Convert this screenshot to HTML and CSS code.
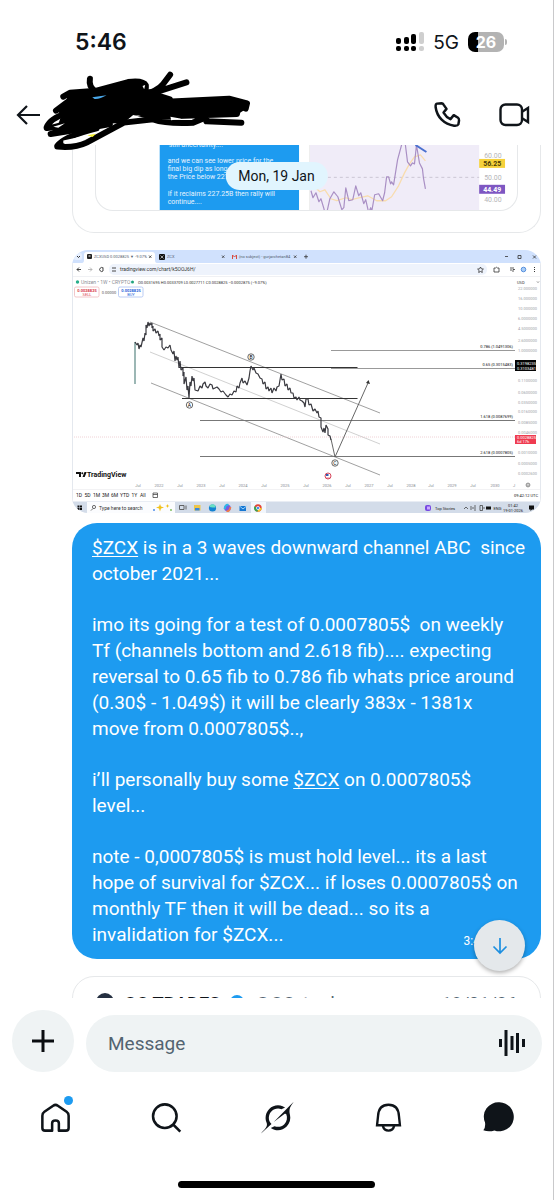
FILE: index.html
```
<!DOCTYPE html>
<html lang="en">
<head>
<meta charset="utf-8">
<meta name="viewport" content="width=device-width, initial-scale=1">
<title>Messages</title>
<link rel="stylesheet" href="styles.css">
</head>
<body>
<div class="screen">
  <div class="status">
    <time class="clock">5:46</time>
    <div class="status-right">
      <svg class="signal" viewBox="0 0 28 20" aria-label="Signal">
        <g fill="#000"><rect x="0" y="6" width="5" height="6" rx="2"/><rect x="8" y="5" width="5" height="7" rx="2"/><rect x="15" y="2" width="5" height="10" rx="2"/><rect x="0" y="14" width="5" height="5" rx="2"/><rect x="8" y="14" width="5" height="5" rx="2"/><rect x="15" y="14" width="5" height="5" rx="2"/></g>
        <g fill="#cfcfcf"><rect x="23" y="0" width="5" height="12" rx="2"/><rect x="23" y="14" width="5" height="5" rx="2"/></g>
      </svg>
      <span class="network">5G</span>
      <span class="battery"><span class="battery-body">26</span><span class="battery-cap"></span></span>
    </div>
  </div>

  <header class="header">
    <button class="icon-btn" aria-label="Back">
      <svg class="back" viewBox="0 0 24 22" fill="none" stroke="#0f1419" stroke-width="2.200"><path d="M24 11H2M11 2 2 11l9 9"/></svg>
    </button>
    <div class="header-actions">
      <button class="icon-btn" aria-label="Call">
        <svg class="call" viewBox="466 298 88 88" fill="none" stroke="#0f1419" stroke-width="7.500" stroke-linejoin="round"><path d="M478 309 492 308Q496 308 498 312L507 325 498 336Q506 350 519 356L529 344 542 352Q545 354 545 360L543 372Q541 377 530 376C500 372 478 350 474 320Q473 310 478 309Z"/></svg>
      </button>
      <button class="icon-btn" aria-label="Video call">
        <svg class="video" viewBox="0 0 31 24" fill="none" stroke="#0f1419" stroke-width="2.400"><rect x="1.500" y="1.500" width="21.500" height="20.500" rx="5"/><path d="M23.500 8.500 29 5v14l-5.500-3.500"/></svg>
      </button>
    </div>
    <svg class="redaction" viewBox="120 210 640 240" aria-hidden="true">
      <path d="M190 285 270 272 385 244 432 247 440 268 470 268 490 300 690 292 742 310 738 328 715 342 620 352 560 354 500 350 450 358 400 345 372 368 310 372 290 380 150 400 175 372 185 345 168 330 205 300Z"/>
      <g fill="none" stroke="#000" stroke-width="18" stroke-linecap="round" stroke-linejoin="round">
        <path d="M270 236Q266 260 285 272"/>
        <path d="M190 290 210 278 290 272 385 246Q430 240 438 256 440 285 410 298L200 345"/>
        <path d="M511 224 490 252Q475 272 420 290M560 247 440 285M470 285 510 298"/>
        <path d="M168 332 210 300M140 382Q150 355 200 340M152 402 260 385 330 372M140 384Q160 385 200 370"/>
        <path d="M172 438Q190 410 290 385M172 440Q225 445 260 428L372 368 460 358Q500 372 580 368L620 352M500 305 688 296 742 310 738 326M460 350 712 342 714 326M620 364 725 368"/>
      </g>
      <path d="M190 422 280 402 258 414Q225 432 190 430Z" fill="#fff"/>
      <path d="M277 292 320 286Q300 298 284 297Z" fill="#4aa8ea"/><path d="M262 406 288 401 278 411Z" fill="#f2ee2c"/>
      <path d="M428 258 436 255 433 268ZM160 380 195 370 175 383ZM512 350 545 356 514 361ZM402 348 423 345 406 351Z" fill="#fff"/>
    </svg>
  </header>

  <main class="thread">
    <span class="date-pill">Mon, 19 Jan</span>

    <article class="card card-top">
      <div class="quote">
        <svg class="picture" viewBox="95 145 423 65" role="img" aria-label="Quoted post with chart">
          <rect x="159" y="145" width="140" height="66" fill="#1d9bf0"/>
          <g class="s7" fill="#e4f3fe"><text x="168" y="147">still uncertainty....</text><text x="167" y="163">and we can see lower price for the</text><text x="167" y="171">final big dip as long as</text><text x="167" y="179">the Price below 227.25B</text><text x="167" y="196">If it reclaims 227.25B then rally will</text><text x="167" y="204">continue....</text></g>
          <rect x="310" y="145" width="170" height="66" fill="#f0ecf8"/>
          <path d="M310 177.500H480" stroke="#cbc6d4" stroke-dasharray="3 3"/>
          <path d="M309.500 145V211" stroke="#eee"/>
          <g fill="none" stroke-linejoin="round">
            <path stroke="#f8dcae" stroke-width="1.300" d="M311 184 320 192 325 190 331 199 337 201 346 198 352 200 360 198 368 196 377 201 386 201 392 197 399 186 405 173 410 164 415 157 421 155 426 161"/>
            <path stroke="#a98fc4" stroke-width="1.200" d="M311 191 313 198 316 193 319 202 321 199 324 209 326 217 330 199 334 192 338 197 342 210 344 208 346 188 349 201 353 200 356 186 359 196 361 193 364 204 366 200 369 213 371 208 372 212 375 195 379 194 383 201 385 193 387 177 389 177 391 184 392 182 394 185 398 160 402 145 403 135 405 138 408 162 411 166 413 163 415 164 417 145 420 163 423 169 424 178 426 189"/>
            <path stroke="#4a70cf" stroke-width="2" d="M416 145 427 152"/>
          </g>
          <rect x="480" y="159" width="26" height="9" fill="#f5d13b"/><rect x="480" y="185" width="26" height="9" fill="#7e57c2"/>
          <g class="s7" fill="#b5b5b8"><text x="485" y="158">60.00</text><text x="485" y="180">50.00</text><text x="485" y="202">40.00</text></g>
          <g class="s7 strong"><text x="484" y="166" fill="#4a3b06">56.25</text><text x="484" y="192" fill="#fff">44.49</text></g>
        </svg>
      </div>
    </article>

    <svg class="picture photo" viewBox="72 250 469 263" role="img" aria-label="TradingView chart of ZCX">
      <rect x="72" y="250" width="469" height="263" fill="#fff"/>
      <rect x="72" y="250" width="469" height="13" fill="#d0e1fd"/>
      <path d="M82 263Q84 263 84 260V255Q84 252 87 252H152Q155 252 155 255V260Q155 263 157 263Z" fill="#fff"/>
      <rect x="74" y="253" width="8" height="7" rx="2" fill="#e6effe"/><path d="m77 256 1.500 1.500 1.500-1.500" fill="none" stroke="#333"/>
      <rect x="87" y="254" width="5" height="5" rx="1" fill="#222"/><path d="M88.500 256h2" stroke="#fff"/>
      <rect x="159" y="254" width="6" height="6" rx="1" fill="#111"/><path d="m160.500 255.500 3 3m0-3-3 3" stroke="#fff" stroke-width=".6"/>
      <path d="M232.500 259v-4l2 2 2-2v4" stroke="#d64b3f" fill="none"/>
      <path d="m149 255.500 2.400 2.400m0-2.400-2.400 2.400m73-2.400 2.400 2.400m0-2.400-2.400 2.400m72-2.400 2.400 2.400m0-2.400-2.400 2.400m10-1.200h4m-2-2v4M505 256.500h3M518 255.500h3v3h-3zM533 255.500l3 3m0-3-3 3" fill="none" stroke="#333" stroke-width=".8"/>
      <g class="s4" fill="#53606f"><text x="94" y="258">ZCXUSD 0.0028825 ▼ -9.07%</text><text x="167" y="258">ZCX</text><text x="239" y="258">(no subject) - gurjarchetan84</text></g>
      <rect x="109" y="264" width="378" height="11" rx="5" fill="#eef3fc"/>
      <path d="M81 269.500h-4m2-2-2 2 2 2M103 268a2 2 0 1 0 0 3v-3.500M112 268h4m-4 3h4" fill="none" stroke="#333" stroke-width=".9"/><path d="M88 269.500h4m-2-2 2 2-2 2" fill="none" stroke="#aaa" stroke-width=".8"/>
      <text class="s5" x="120" y="271" fill="#333">tradingview.com/chart/k5OOJ6H/</text>
      <path d="m480.500 267 .9 1.800 2 .3-1.500 1.400.4 2-1.800-1-1.800 1 .4-2-1.500-1.400 2-.3zM494 268h1.500q1-1.500 2 0h1.500v4h-5zM510 268h4m-4 2h2m1 2v-2.500h2" fill="none" stroke="#333" stroke-width=".8"/><circle cx="523.500" cy="269.500" r="2.300" fill="#a9cdf6" stroke="#3a7bd5" stroke-width=".8"/><path d="M534.500 267v5" stroke="#333" stroke-dasharray="1 1"/>
      <path d="M72 276.500h469" stroke="#f0f1f4"/>
      <circle cx="77.500" cy="282" r="1.700" fill="#27ae8b"/><circle cx="132.500" cy="282" r="1.500" fill="#1fa37b"/>
      <text class="s5" x="81" y="284" fill="#8b8e96">Unizen • 1W • CRYPTO</text>
      <text class="s4" x="138" y="283.500" fill="#333">O0.0031695 H0.0033709 L0.0027711 C0.0028825 −0.0002875 (−9.07%)</text>
      <g fill="#fff" stroke-width=".8"><rect x="74.500" y="287" width="24.500" height="10" rx="1.500" stroke="#efb9bd"/><rect x="118.500" y="287" width="24.500" height="10" rx="1.500" stroke="#a9bff1"/></g>
      <g class="s4 strong" text-anchor="middle"><text x="87" y="291.500" fill="#d8394a">0.0028825</text><text x="131" y="291.500" fill="#2962d9">0.0028825</text></g>
      <g class="s4" text-anchor="middle"><text x="87" y="296" fill="#d8394a">SELL</text><text x="131" y="296" fill="#2962d9">BUY</text><text x="109" y="293.500" fill="#555">0.00000</text></g>

      <g fill="none" stroke="#888" stroke-width=".8"><path d="M150 322 380 413M151 383 380 475"/><path d="M150 352 380 444" stroke="#c4c4c4"/></g>
      <path d="M331 350.500H515M331 368.500H515" stroke="#999"/>
      <path d="M179 367.500H357.500M182 398.500H357.500" stroke="#333" stroke-width="1.200"/>
      <path d="M200 420.500H515M200 456.500H515" stroke="#777"/>
      <path d="M72 437H515" stroke="#ecc6cb" stroke-width=".8" stroke-dasharray="1 1"/>
      <path d="M135 384V342" stroke="#5a8783" stroke-width="1.200"/>
      <g fill="none" stroke="#3a3a40" stroke-width="1.200" stroke-linejoin="bevel">
        <path d="M135 342 137 345 138 343 139 349 140 345 141 347 143 338 144 341 145 333 146 335 146 325 147 328 148 322 149 326 150 323 151 325 152 323 152 328 153 326 153 331 155 329 156 333 158 331 159 336 160 334 160 340 162 338 162 347 164 350 166 347 168 348 170 345 171 350 173 354 174 351 175 361 176 356 177 360 178 357 179 368 180 361 181 370 183 368 183 376 184 372 184 384 186 377 187 390 188 386 189 398 190 382 191 386 192 376 193 381 194 378 195 390 198 391 200 386 202 388 203 384 205 382 206 386 208 388 210 384 212 385 213 389 215 388 217 387 219 389 221 392 223 391 226 395 228 397 230 394 232 395 234 391 236 392 237 386 239 388 240 383 242 378 243 383 245 381 247 385 249 378 250 371 251 366 253 370 254 368 256 373 258 374 260 378 262 379 263 384 265 382 266 389 268 387 269 391 271 388 272 393 274 388 276 391 277 387 279 386 280 380 281 374 282 380 284 379 285 386 287 384 288 390 290 388 291 393 293 393 294 398 296 397 297 400 299 397 300 400 302 401 304 403 305 407 306 399 308 399 309 405 311 404 313 411 315 409 317 413 318 411 319 417 321 418 321 427 323 432 324 428 325 433 326 425 328 429 328 435 330 436 331 440"/>
        <path d="M331 439 335 457 368 383" stroke="#555" stroke-width=".9"/>
      </g>
      <path d="m368.500 380 1.500 4-4-1z" fill="#333"/>
      <g fill="#fff" stroke="#444" stroke-width=".8"><circle cx="251" cy="357" r="3.200"/><circle cx="189.500" cy="405" r="3.200"/><circle cx="335" cy="463" r="3.200"/></g>
      <g class="s5" text-anchor="middle"><text x="251" y="359">B</text><text x="189.500" y="407">A</text><text x="335" y="465">C</text></g>
      <circle cx="328" cy="476" r="3" fill="#fff" stroke="#d6455a"/><path d="M326 475h2.500" stroke="#345bb0" stroke-width="2"/><path d="M326 478h4" stroke="#d6455a" stroke-width=".7"/>
      <g class="s4" text-anchor="end" fill="#111"><text x="513" y="347.500">0.786 (1.0491306)</text><text x="513" y="366">0.65 (0.3015483)</text><text x="513" y="418">1.618 (0.0087699)</text><text x="513" y="454">2.618 (0.0007805)</text></g>
      <g class="s4" fill="#a0a2a8"><text x="518" y="290">22.000000</text><text x="518" y="300">16.000000</text><text x="518" y="310">10.000000</text><text x="518" y="320">6.0000000</text><text x="518" y="330">4.5000000</text><text x="518" y="342">2.6000000</text><text x="518" y="352">1.0000000</text><text x="518" y="382">0.1100000</text><text x="518" y="394">0.0600000</text><text x="518" y="404">0.0350000</text><text x="518" y="413">0.0160000</text><text x="518" y="424">0.0085000</text><text x="518" y="434">0.0046000</text><text x="518" y="454">0.0010000</text><text x="518" y="465">0.0005000</text><text x="518" y="475">0.0002600</text></g>
      <text class="s4" x="517" y="284" fill="#333">USD</text><path d="m537 281.500 1 1 1-1" stroke="#333" fill="none" stroke-width=".6"/>
      <rect x="515" y="360" width="21" height="11" fill="#050505"/><rect x="515" y="435" width="21" height="9" fill="#ef3b50"/>
      <g class="s4" fill="#fff"><text x="517" y="364.500">0.3198235</text><text x="517" y="369.500">0.3103481</text><text x="517" y="439">0.0028825</text><text x="517" y="443">6d 17h</text></g>

      <path d="M76 472h5v5h-2v-3h-3zM84.500 472h2.200l-2 5h-2.200z" fill="#111"/><circle cx="82.300" cy="473.200" r="1" fill="#111"/>
      <text class="s7 strong" x="87" y="477" fill="#111">TradingView</text>
      <g class="s4" text-anchor="middle" fill="#85888f"><text x="138" y="486.500">Jul</text><text x="159" y="486.500">2022</text><text x="180" y="486.500">Jul</text><text x="201" y="486.500">2023</text><text x="222" y="486.500">Jul</text><text x="243" y="486.500">2024</text><text x="264" y="486.500">Jul</text><text x="285" y="486.500">2025</text><text x="306" y="486.500">Jul</text><text x="327" y="486.500">2026</text><text x="348" y="486.500">Jul</text><text x="369" y="486.500">2027</text><text x="390" y="486.500">Jul</text><text x="411" y="486.500">2028</text><text x="431" y="486.500">Jul</text><text x="452" y="486.500">2029</text><text x="473" y="486.500">Jul</text><text x="495" y="486.500">2030</text><text x="514" y="486.500">J</text></g>
      <circle cx="528" cy="485" r="1.900" fill="none" stroke="#555" stroke-width=".7"/><circle cx="528" cy="485" r=".6"/>
      <path d="M72 489.500h469" stroke="#f2f2f4"/>
      <g class="s5" fill="#222"><text x="76" y="497">1D</text><text x="84.500" y="497">5D</text><text x="93" y="497">1M</text><text x="102" y="497">3M</text><text x="111" y="497">6M</text><text x="120" y="497">YTD</text><text x="131.500" y="497">1Y</text><text x="140" y="497">All</text></g>
      <text class="s4" x="538" y="496.500" text-anchor="end" fill="#111">09:42:12 UTC</text>
      <path d="M153 493h4.500v4.500H153zM153 494.500h4.500" fill="none" stroke="#333" stroke-width=".7"/>

      <rect x="72" y="501.500" width="469" height="12" fill="#d3dce9"/><rect x="87" y="502" width="88" height="11" fill="#fbfcfe"/>
      <path d="M77.500 505.500h2v2h-2zM80 505.500h2v2h-2zM77.500 508h2v2h-2zM80 508h2v2h-2z" fill="#111"/>
      <circle cx="94" cy="507" r="1.600" fill="none" stroke="#333" stroke-width=".7"/><path d="m93 508.500-2 2" stroke="#333" stroke-width=".7"/>
      <text class="s5" x="99" y="509.500" fill="#333">Type here to search</text>
      <path d="m160 504 1 2.500 3 1-3 1-1 3-1-3-3-1 3-1z" fill="#f2c21d"/><path d="m167.500 504 .6 1.400 1.500.6-1.500.6-.6 1.400-.6-1.400-1.500-.6 1.500-.6z" fill="#f2c21d"/><circle cx="154" cy="510" r="1" fill="#4f8ee8"/><circle cx="171" cy="510" r=".9" fill="#72b84c"/>
      <path d="M179.500 505.500h4.500v4h-4.500zM186 505.500v4" fill="none" stroke="#555" stroke-width=".9"/>
      <rect x="194" y="505" width="6.500" height="5.500" fill="#edc54a"/><rect x="195" y="508" width="4.500" height="2.500" fill="#3b88dc"/>
      <circle cx="212.500" cy="508" r="3.600" fill="#1483d2"/><path d="M209.500 507a3 3 0 0 1 6 .5h-3" fill="#69dfc4"/>
      <circle cx="227.500" cy="508" r="3.300" fill="#7a5bdd"/><path d="M224.500 509q1-5 4-4" stroke="#2db6e8" stroke-width="2" fill="none"/><path d="M230.500 507q-1 5-4 4" stroke="#ef7b4b" stroke-width="1.800" fill="none"/>
      <path d="M239.500 506h6.500v5h-6.500z" fill="#1677d2"/><path d="m239.500 506 3.500 3 3.500-3" fill="none" stroke="#9bd3fb"/>
      <rect x="251" y="502" width="15" height="11.500" fill="#f2f6fc"/><circle cx="258" cy="508" r="3.700" fill="#e44536"/><path d="M258 508h3.700a3.700 3.700 0 0 1-4.200 3.700z" fill="#f8c62e"/><path d="M258 508l-.5 3.700a3.700 3.700 0 0 1-3-5.500z" fill="#35a651"/><circle cx="258" cy="508" r="1.600" fill="#3f7ee8" stroke="#fff" stroke-width=".7"/>
      <rect x="425" y="505" width="6" height="6" rx="2" fill="#7748e2"/><path d="M427 506.500h3v3h-3z" fill="#caa9ff"/>
      <text class="s4" x="435" y="509.500" fill="#222">Top Stories</text>
      <path d="m464 509 2-2 2 2M471 506v4m2-3v2m2-4v6M480 505.500h2.500v5H480zM484 507v2" fill="none" stroke="#333" stroke-width=".7"/><rect x="486" y="506.500" width="5" height="3" fill="#111"/>
      <g class="s4" fill="#222"><text x="493.500" y="509.500">ENG</text><text x="513" y="506.500" text-anchor="middle">01:42</text><text x="513" y="512" text-anchor="middle">19-01-2026</text></g>
      <path d="M529 505.500h5v4h-2l-1.500 1.500v-1.500H529z" fill="#111"/>
      <path d="M72.500 263V513M540.500 263V513" stroke="#e4e8ee"/>
    </svg>

    <article class="bubble">
      <p><a href="#zcx">$ZCX</a> is in a 3 waves downward channel ABC  since
october 2021...</p>
      <p>imo its going for a test of 0.0007805$  on weekly
Tf (channels bottom and 2.618 fib).... expecting
reversal to 0.65 fib to 0.786 fib whats price around
(0.30$ - 1.049$) it will be clearly 383x - 1381x
move from 0.0007805$..,</p>
      <p>i’ll personally buy some <a href="#zcx">$ZCX</a> on 0.0007805$
level...</p>
      <p>note - 0,0007805$ is must hold level... its a last
hope of survival for $ZCX... if loses 0.0007805$ on
monthly TF then it will be dead... so its a
invalidation for $ZCX...</p>
      <time class="sent">3:43 AM</time>
    </article>

    <article class="card card-next">
      <span class="avatar"></span>
      <strong>GG TRADES</strong>
      <span class="verified"></span>
      <span class="handle">@GG_trades</span>
      <time class="posted">18/01/26</time>
    </article>

    <button class="jump" aria-label="Jump to latest">
      <svg viewBox="0 0 16 18" fill="none" stroke="#1d8fe0" stroke-width="1.700"><path d="M8 1v15M1.500 9.500 8 16l6.500-6.500"/></svg>
    </button>
  </main>

  <form class="composer">
    <button type="button" class="add" aria-label="Add"><svg viewBox="0 0 24 24" stroke="#0a0d10" stroke-width="3"><path d="M12 1v22M1 12h22"/></svg></button>
    <div class="field">
      <input type="text" placeholder="Message" aria-label="Message">
      <button type="button" class="icon-btn" aria-label="Record voice"><svg class="wave" viewBox="0 0 26 26" fill="#0f1419"><path d="M0 9h3v8H0zM5.500 0h3v26h-3zM11.500 6h3v14h-3zM17 3h3v20h-3zM23 9h3v8h-3z"/></svg></button>
    </div>
  </form>

  <nav class="tabs">
    <a href="#home" aria-label="Home"><svg viewBox="118 362 98 98" fill="none" stroke="#0f1419" stroke-width="7.500" stroke-linejoin="round"><path d="M134 394 160 376Q167 371 174 376L200 394Q206 398 206 406V442Q206 450 198 450H177V428Q177 420 167 420 157 420 157 428V450H136Q128 450 128 442V406Q128 398 134 394Z"/></svg><i class="dot"></i></a>
    <a href="#search" aria-label="Search"><svg viewBox="451 362 98 98" fill="none" stroke="#0f1419" stroke-width="7.500"><circle cx="495" cy="407" r="35"/><path d="M519 431 541 453"/></svg></a>
    <a href="#grok" aria-label="Grok"><svg class="grok" viewBox="0 0 33 32" fill="#0f1419"><path d="M12.745 20.540l10.970-8.190c.539-.4 1.307-.244 1.564.38 1.349 3.288.746 7.241-1.938 9.955-2.683 2.714-6.417 3.310-9.830 1.954l-3.728 1.745c5.347 3.697 11.840 2.782 15.898-1.324 3.219-3.255 4.216-7.692 3.284-11.693l.008.009c-1.351-5.878.332-8.227 3.782-13.031L33 0l-4.540 4.590v-.014L12.743 20.544m-2.263 1.987c-3.837-3.707-3.175-9.446.1-12.755 2.420-2.449 6.388-3.448 9.852-1.979l3.720-1.737c-.67-.49-1.530-1.017-2.515-1.387-4.455-1.854-9.789-.931-13.410 2.728-3.483 3.523-4.579 8.940-2.697 13.561 1.405 3.454-.899 5.898-3.220 8.364C1.490 30.200.666 31.074 0 32l10.478-9.466"/></svg></a>
    <a href="#alerts" aria-label="Notifications"><svg viewBox="289 362 98 98" fill="none" stroke="#0f1419" stroke-width="7"><path d="M304 434 307 406Q309 373 338 373 367 373 369 406L372 434ZM321 436Q325 450 338 450 351 450 355 436"/></svg></a>
    <a href="#messages" aria-label="Messages"><svg viewBox="619 362 98 98" fill="#0f1419"><path d="M668 366a43 43 0 1 1-15 83.500Q636 455 620 449 627 441 625 426A43 43 0 0 1 668 366Z"/></svg></a>
  </nav>
  <div class="home-indicator"></div>
</div>
</body>
</html>
```
FILE: styles.css
```
* { box-sizing: border-box; }
body { margin: 0; background: #fff; color: #0f1419; font-family: Roboto, "Liberation Sans", sans-serif; }
button { border: 0; padding: 0; background: none; cursor: pointer; }
svg { display: block; }

.screen { display: flex; flex-direction: column; height: 100vh; border-right: 1px solid #c9c9cb; overflow: hidden; }

.status { display: flex; align-items: center; justify-content: space-between; height: 84px; padding: 0 46px 0 75px; font-family: Inter, sans-serif; }
.clock { font-size: 23px; font-weight: 600; }
.status-right { display: flex; align-items: center; gap: 9px; }
.signal { width: 28px; height: 20px; }
.network { font-size: 19px; }
.battery { display: flex; align-items: center; gap: 1px; }
.battery-body { width: 36px; height: 20px; border-radius: 7px; background: linear-gradient(90deg, #000 10px, #b3b3b3 10px); color: #fff; font-size: 16px; font-weight: 700; line-height: 20px; text-align: center; }
.battery-cap { width: 2px; height: 6px; border-radius: 0 2px 2px 0; background: #b3b3b3; }

.header { position: relative; z-index: 2; display: flex; flex-shrink: 0; align-items: center; justify-content: space-between; height: 61px; padding: 0 23px 0 16px; }
.header-actions { display: flex; align-items: center; gap: 37px; }
.icon-btn { display: grid; place-items: center; }
.back { width: 24px; height: 22px; }
.call { width: 29px; height: 29px; }
.video { width: 31px; height: 24px; }
.redaction { position: absolute; left: 40px; top: -14px; width: 213px; height: 80px; }

.thread { position: relative; flex: 1; min-height: 0; padding: 0 12px 0 72px; overflow: hidden; }
.date-pill { position: absolute; left: 50%; top: 17px; transform: translateX(-50%); padding: 0 13px; border-radius: 14px; background: #e1f5fe; font-size: 14px; line-height: 28px; white-space: nowrap; }
.card { border: 1px solid #e6e8ea; }
.card-top { padding: 0 22px 21px; border-top: 0; border-radius: 0 0 22px 22px; }
.quote { border: 1px solid #e6e8ea; border-top: 0; border-radius: 0 0 18px 18px; overflow: hidden; }
.picture { width: 100%; height: auto; }
.photo { margin-top: 17px; border-radius: 16px; }
.s4 { font: 4px Roboto, sans-serif; }
.s5 { font: 5px Roboto, sans-serif; }
.s7 { font: 7px Roboto, sans-serif; }
.strong { font-weight: 700; }

.bubble { position: relative; display: flex; flex-direction: column; gap: 25px; margin-top: 10px; padding: 12px 12px 11px 20px; border-radius: 25px; background: #1d9bf0; color: #fff; font-size: 19px; line-height: 26px; }
.bubble p { margin: 0; white-space: pre-wrap; }
.bubble a { color: inherit; text-underline-offset: 2px; }
.sent { position: absolute; right: 33px; bottom: 8px; font-size: 12px; line-height: 20px; }

.card-next { display: flex; align-items: flex-start; gap: 10px; margin-top: 17px; padding: 14px 23px 40px; border-radius: 22px; font-size: 18px; line-height: 26px; }
.avatar { width: 18px; height: 18px; margin-top: 2px; border-radius: 50%; background: #253041; }
.verified { width: 14px; height: 14px; margin-top: 4px; border-radius: 50%; background: #1d9bf0; }
.handle, .posted { color: #536471; }
.posted { margin-left: auto; }
.jump { position: absolute; right: 28px; bottom: 27px; display: grid; place-items: center; width: 51px; height: 51px; border-radius: 50%; background: #e4e8eb; box-shadow: 0 2px 4px rgba(0, 0, 0, .3); }
.jump svg { width: 16px; height: 18px; }

.composer { display: flex; align-items: center; gap: 12px; padding: 12px 11px 0 12px; }
.add { display: grid; place-items: center; flex-shrink: 0; width: 62px; height: 62px; border-radius: 50%; background: #eff3f4; }
.add svg { width: 24px; height: 24px; }
.field { display: flex; align-items: center; flex: 1; height: 57px; margin-top: 4px; padding: 0 17px 0 22px; border-radius: 29px; background: #eff3f4; }
.field input { flex: 1; min-width: 0; padding: 0; border: 0; outline: 0; background: none; font: 19px Roboto, sans-serif; }
.field input::placeholder { color: #536471; opacity: 1; }
.wave { width: 26px; height: 26px; }

.tabs { display: flex; justify-content: space-between; padding: 29px 37px 47px 39px; }
.tabs a { position: relative; }
.tabs svg { width: 33px; height: 33px; }
.dot { position: absolute; top: -5px; right: -1px; width: 9px; height: 9px; border-radius: 50%; background: #1d9bf0; }
.home-indicator { align-self: center; flex-shrink: 0; width: 197px; height: 7px; margin-bottom: 12px; border-radius: 4px; background: #000; }
```
